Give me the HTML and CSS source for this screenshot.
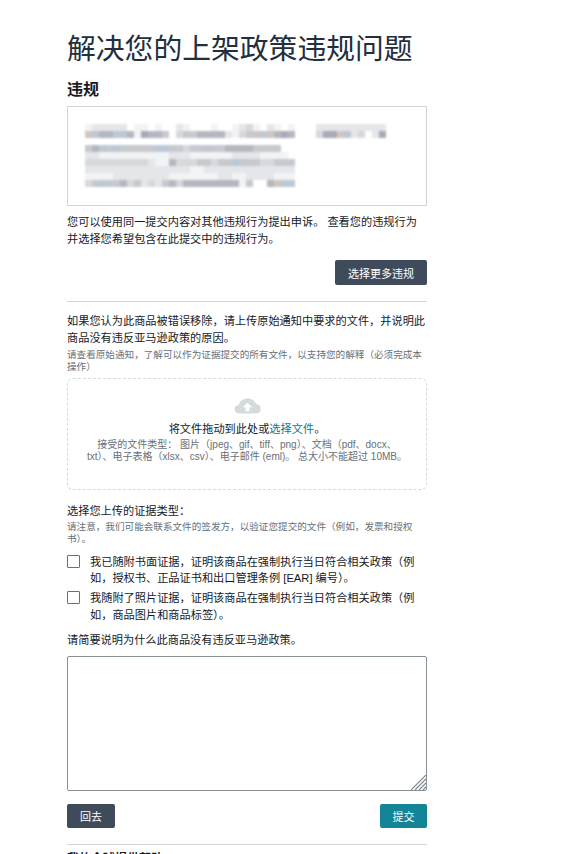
FILE: index.html
```html
<!DOCTYPE html>
<html lang="zh-CN">

<head>
    <meta charset="UTF-8">
    <title>解决您的上架政策违规问题</title>
    <link rel="stylesheet" href="styles.css">
</head>

<body>
    <div class="container">
        <h1 class="page-title">解决您的上架政策违规问题</h1>
        <h2 class="section-title">违规</h2>
        <div class="violation-box">
            <svg class="blur-text" width="302" height="64" viewBox="0 0 302 64" shape-rendering="crispEdges">
                <path fill="#f2f3f5"
                    d="M0 0h7v7h-7z M49 0h14v7h-14z M70 0h7v7h-7z M98 0h7v7h-7z M126 0h7v7h-7z M147 0h7v7h-7z M168 0h7v7h-7z M189 0h7v7h-7z M203 0h7v7h-7z M49 7h7v7h-7z M147 7h7v7h-7z
                    M14 28h70v7h-70z M105 28h42v7h-42z M175 28h28v7h-28z M70 35h14v7h-14z M105 42h14v7h-14z M0 49h28v7h-28z M84 49h49v7h-49z M147 49h14v7h-14z M189 49h21v7h-21z M154 56h14v7h-14z" />
                <path fill="#e4e6e9"
                    d="M7 0h35v7h-35z M91 0h7v7h-7z M154 0h7v7h-7z M182 0h7v7h-7z M231 0h70v7h-70z M140 7h7v7h-7z M266 7h7v7h-7z M287 7h7v7h-7z
                    M0 28h14v7h-14z M84 28h21v7h-21z M147 28h28v7h-28z M63 35h7v7h-7z M0 42h105v7h-105z M119 42h91v7h-91z M28 49h56v7h-56z M133 49h14v7h-14z M161 49h28v7h-28z M56 56h7v7h-7z M70 56h7v7h-7z" />
                <path fill="#d6d8dc"
                    d="M161 0h7v7h-7z M91 7h7v7h-7z M154 7h7v7h-7z M231 7h7v7h-7z M273 7h7v7h-7z
                    M98 21h7v7h-7z M0 35h63v7h-63z M91 35h21v7h-21z M126 35h7v7h-7z M175 35h14v7h-14z M0 56h7v7h-7z M42 56h7v7h-7z M63 56h7v7h-7z M91 56h7v7h-7z" />
                <path fill="#c6c9ce"
                    d="M77 7h7v7h-7z M98 7h14v7h-14z M161 7h7v7h-7z
                    M0 21h7v7h-7z M21 21h7v7h-7z M35 21h35v7h-35z M84 21h14v7h-14z M105 21h14v7h-14z M126 21h14v7h-14z M168 21h28v7h-28z M112 35h14v7h-14z M133 35h14v7h-14z M154 35h21v7h-21z M189 35h21v7h-21z M7 56h7v7h-7z M21 56h14v7h-14z M49 56h7v7h-7z M77 56h7v7h-7z M161 56h7v7h-7z" />
                <path fill="#b4b7c0"
                    d="M14 7h14v7h-14z M42 7h7v7h-7z M63 7h14v7h-14z M112 7h28v7h-28z M189 7h7v7h-7z M203 7h7v7h-7z
                    M7 21h7v7h-7z M140 21h14v7h-14z M154 21h14v7h-14z M84 35h7v7h-7z M35 56h7v7h-7z M84 56h7v7h-7z M98 56h42v7h-42z M140 56h14v7h-14z M182 56h7v7h-7z" />
                <path fill="#a8abb7"
                    d="M56 7h7v7h-7z M196 7h7v7h-7z M238 7h14v7h-14z M294 7h7v7h-7z" />
                <path fill="#bcc8d6"
                    d="M7 7h7v7h-7z M28 7h14v7h-14z M175 7h7v7h-7z M259 7h7v7h-7z
                    M14 21h7v7h-7z M28 21h7v7h-7z M70 21h14v7h-14z M119 21h7v7h-7z M147 35h7v7h-7z M14 56h7v7h-7z M196 56h14v7h-14z" />
                <path fill="#d0c6c0"
                    d="M0 7h7v7h-7z M168 7h7v7h-7z M182 7h7v7h-7z M252 7h7v7h-7z M189 56h7v7h-7z" />
            </svg>
        </div>
        <p class="text appeal-note">您可以使用同一提交内容对其他违规行为提出申诉。 查看您的违规行为并选择您希望包含在此提交中的违规行为。</p>
        <div class="more-row">
            <button class="btn btn-dark">选择更多违规</button>
        </div>
        <hr class="divider">
        <p class="text">如果您认为此商品被错误移除，请上传原始通知中要求的文件，并说明此商品没有违反亚马逊政策的原因。</p>
        <p class="hint upload-hint">请查看原始通知，了解可以作为证据提交的所有文件，以支持您的解释（必须完成本操作）</p>
        <div class="dropzone">
            <svg class="cloud-icon" width="27" height="16" viewBox="0 0 28 20" preserveAspectRatio="none">
                <path fill="#d5dbdb"
                    d="M6 19.500a5.500 5.500 0 0 1-1-10.900C5.800 3.800 9.700.5 14 .5c4.200 0 7.900 3 8.800 7.100A6 6 0 0 1 22 19.500z" />
                <path fill="#fff" d="M14 6l5 5.500h-3v5h-4v-5H9z" />
            </svg>
            <div class="drop-main">将文件拖动到此处或<a class="link" href="#">选择文件</a>。</div>
            <div class="drop-sub">接受的文件类型： 图片（jpeg、gif、tiff、png）、文档（pdf、docx、<br>txt）、电子表格（xlsx、csv）、电子邮件 (eml)。 总大小不能超过 10MB。</div>
        </div>
        <p class="text evidence-label">选择您上传的证据类型：</p>
        <p class="hint evidence-hint">请注意，我们可能会联系文件的签发方，以验证您提交的文件（例如，发票和授权书）。</p>
        <label class="check-row">
            <input type="checkbox" class="check">
            <span>我已随附书面证据，证明该商品在强制执行当日符合相关政策（例如，授权书、正品证书和出口管理条例 [EAR] 编号）。</span>
        </label>
        <label class="check-row">
            <input type="checkbox" class="check">
            <span>我随附了照片证据，证明该商品在强制执行当日符合相关政策（例如，商品图片和商品标签）。</span>
        </label>
        <p class="text explain-label">请简要说明为什么此商品没有违反亚马逊政策。</p>
        <div class="explain-wrap">
            <textarea class="explain-input"></textarea>
            <svg class="resize-grip" width="15" height="15" viewBox="0 0 15 15">
                <path stroke="#7d858a" stroke-width="1.200" d="M0 15L15 0M4 15L15 4M8 15l7-7M12 15l3-3" />
            </svg>
        </div>
        <div class="action-row">
            <button class="btn btn-dark btn-back">回去</button>
            <button class="btn btn-teal">提交</button>
        </div>
        <hr class="divider bottom-divider">
        <h3 class="footer-title">我的全球提供帮助</h3>
    </div>
</body>

</html>
```
FILE: styles.css
```css
html,
body {
    height: 854px;
    overflow: hidden;
}

body {
    margin: 0;
    background-color: #fff;
    color: #16191f;
    font-family: "Liberation Sans", "Noto Sans CJK SC", sans-serif;
    font-size: 11.2px;
    line-height: 16.5px;
}

.container {
    width: 360px;
    margin-left: 67px;
    padding-top: 27px;
}

.page-title {
    margin: 0;
    font-size: 28.8px;
    line-height: 44px;
    font-weight: 400;
    color: #232f3e;
}

.section-title {
    margin: 7px 0 0;
    font-size: 16px;
    line-height: 24px;
    font-weight: 700;
}

.violation-box {
    box-sizing: border-box;
    height: 100px;
    margin-top: 4px;
    padding: 17px 17px 0;
    border: 1px solid #d5d5d5;
}

.blur-text {
    display: block;
    filter: blur(1px);
}

.text {
    margin: 0;
}

.appeal-note {
    margin-top: 8px;
}

.more-row {
    display: flex;
    justify-content: flex-end;
    margin-top: 13px;
}

.btn {
    height: 25px;
    padding: 0 12px;
    border: none;
    border-radius: 2px;
    color: #fff;
    font-family: inherit;
    font-size: 11px;
}

.btn-dark {
    width: 92px;
    padding: 0;
    background-color: #3f4b5b;
}

.btn-teal {
    width: 47px;
    padding: 0;
    background-color: #148497;
}

.btn-back {
    width: 48px;
}

.divider {
    height: 1px;
    margin: 16px 0 11px;
    border: none;
    background-color: #d5d5d5;
}

.hint {
    margin: 0;
    font-size: 9.6px;
    line-height: 12px;
    color: #687078;
}

.upload-hint {
    margin-top: 3px;
}

.dropzone {
    box-sizing: border-box;
    height: 112px;
    margin-top: 5px;
    padding-top: 19px;
    border: 1px dashed #d5dbdb;
    border-radius: 6px;
    text-align: center;
}

.cloud-icon {
    display: block;
    margin: 0 auto;
}

.drop-main {
    margin-top: 8px;
    line-height: 14px;
}

.link {
    color: #0f7a8c;
    text-decoration: none;
}

.drop-sub {
    margin-top: 3px;
    font-size: 10px;
    line-height: 12px;
    color: #687078;
}

.evidence-label {
    margin-top: 13px;
}

.evidence-hint {
    margin-top: 1px;
}

.check-row {
    display: flex;
    gap: 10px;
    margin-top: 3.5px;
}

.evidence-hint + .check-row {
    margin-top: 9px;
}

.check {
    flex: none;
    width: 13px;
    height: 13px;
    margin: 1px 0 0;
    appearance: none;
    border: 1px solid #687078;
    border-radius: 1px;
    background-color: #fff;
}

.explain-label {
    margin-top: 9px;
}

.explain-wrap {
    position: relative;
    margin-top: 7px;
}

.explain-input {
    display: block;
    box-sizing: border-box;
    width: 360px;
    height: 135px;
    border: 1px solid #879196;
    border-radius: 2px;
    resize: none;
}

.resize-grip {
    position: absolute;
    right: 1px;
    bottom: 1px;
}

.action-row {
    display: flex;
    justify-content: space-between;
    margin-top: 13px;
}

.action-row .btn {
    height: 24px;
}

.bottom-divider {
    margin: 16px 0 6px;
}

.footer-title {
    margin: 0;
    font-size: 12px;
    line-height: 16px;
    font-weight: 700;
}
```
